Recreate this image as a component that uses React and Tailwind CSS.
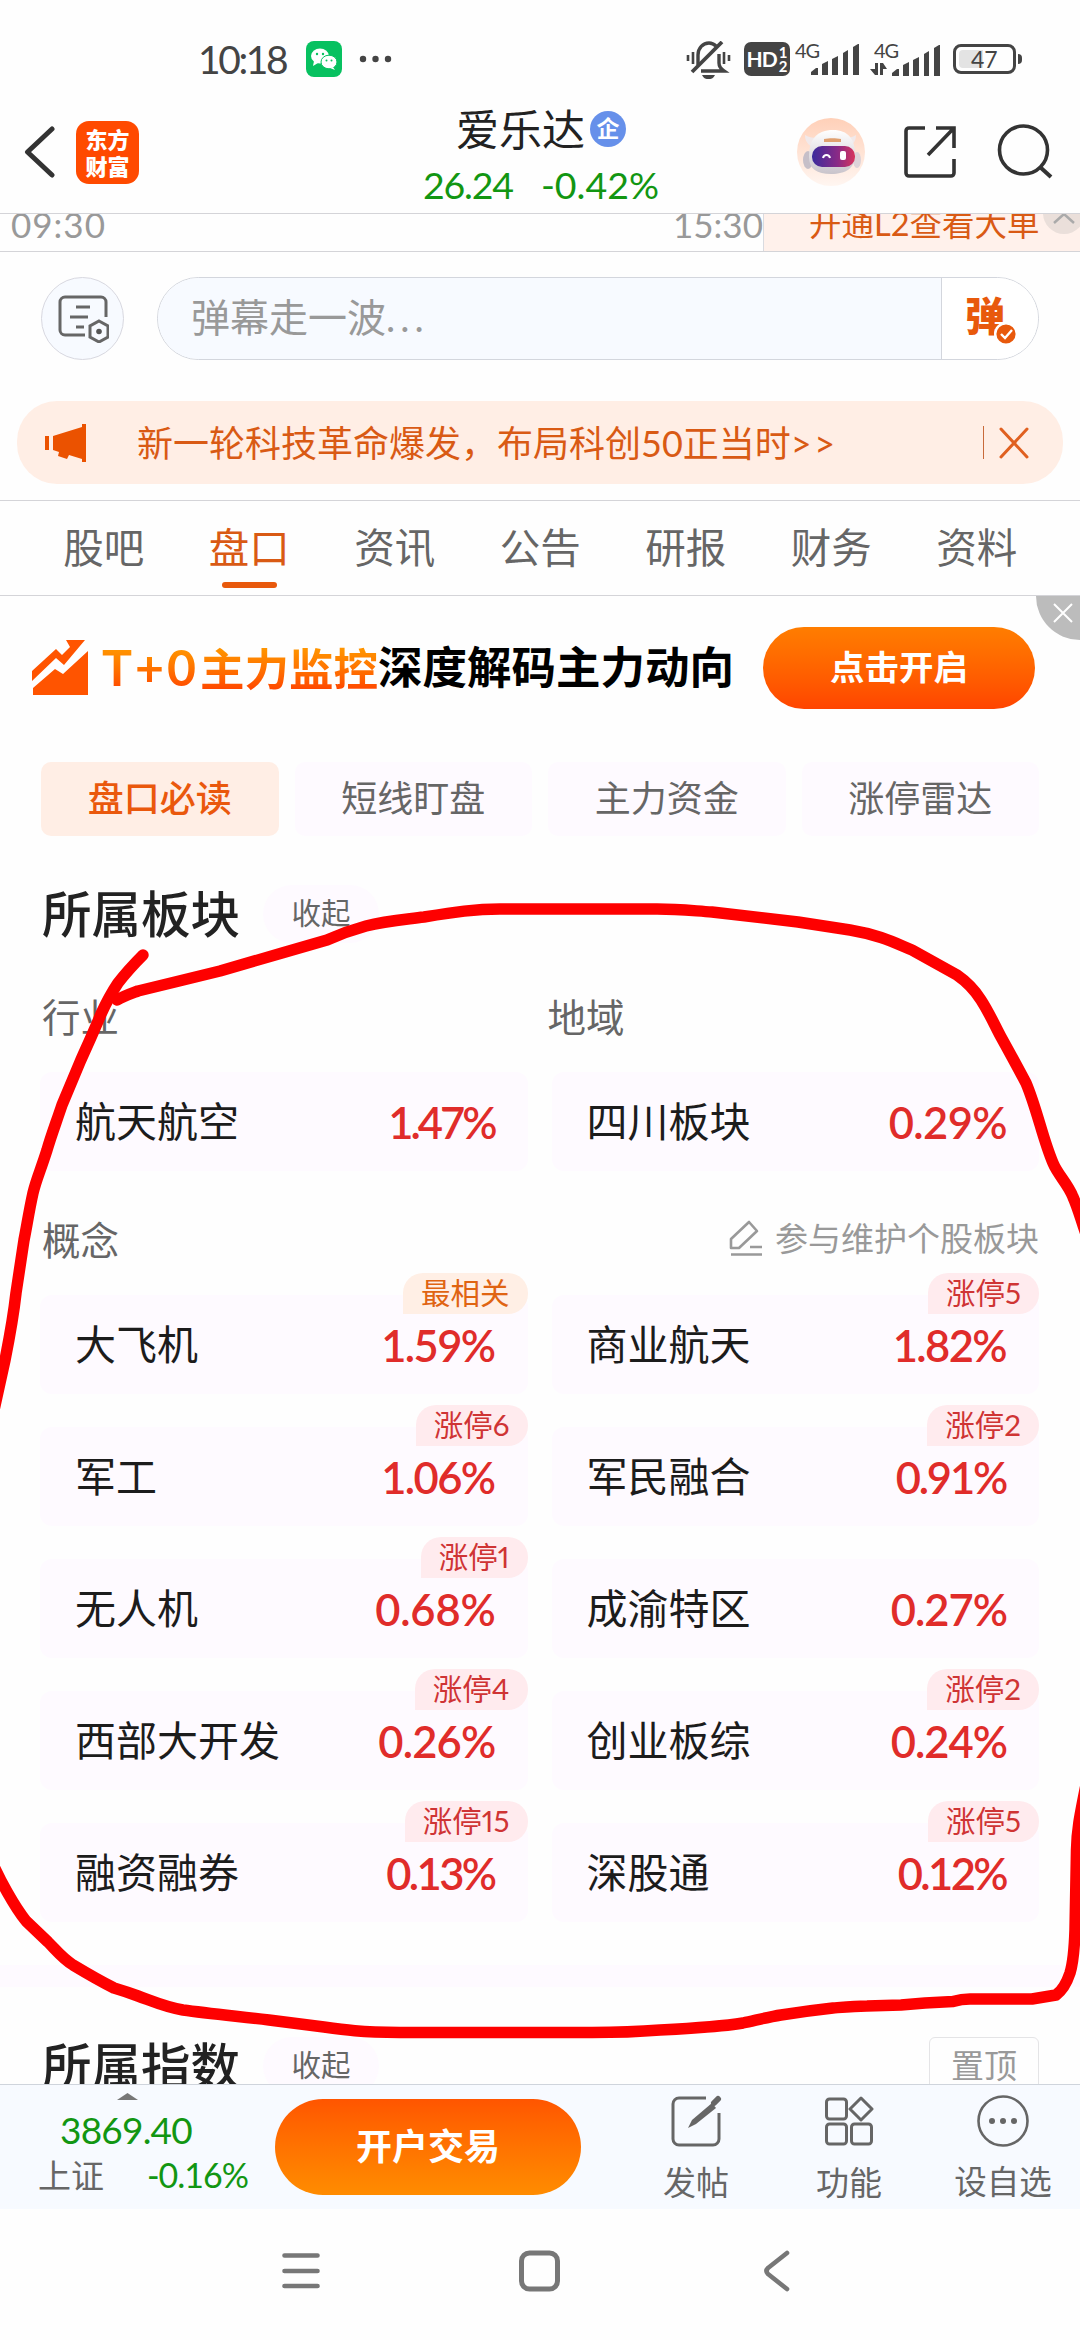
import clsx from "clsx";

const tabs = ["股吧", "盘口", "资讯", "公告", "研报", "财务", "资料"];
const chips = ["盘口必读", "短线盯盘", "主力资金", "涨停雷达"];

// fit: letter spacing of the percentage, narrow digits sit closer together
const tops = [
  { name: "航天航空", value: "1.47%", fit: "tracking-[-3px]" },
  { name: "四川板块", value: "0.29%", fit: "tracking-[-0.6px] -mr-px" },
];

const concepts = [
  { name: "大飞机", value: "1.59%", badge: "最相关", hot: true, fit: "tracking-[-1.6px]" },
  { name: "商业航天", value: "1.82%", badge: "涨停5", fit: "tracking-[-1.6px]" },
  { name: "军工", value: "1.06%", badge: "涨停6", fit: "tracking-[-1.6px]" },
  { name: "军民融合", value: "0.91%", badge: "涨停2", fit: "tracking-[-2.2px]" },
  { name: "无人机", value: "0.68%", badge: "涨停1", fit: "tracking-[-0.2px] -mr-px" },
  { name: "成渝特区", value: "0.27%", fit: "tracking-[-1px] -mr-px" },
  { name: "西部大开发", value: "0.26%", badge: "涨停4", fit: "tracking-[-0.8px] -mr-px" },
  { name: "创业板综", value: "0.24%", badge: "涨停2", fit: "tracking-[-1px] -mr-px" },
  { name: "融资融券", value: "0.13%", badge: "涨停15", fit: "tracking-[-2.6px]" },
  { name: "深股通", value: "0.12%", badge: "涨停5", fit: "tracking-[-2.6px]" },
];

function Signal() {
  return (
    <svg width="49" height="32" viewBox="0 0 49 32" fill="#444">
      <path d="M0 31v-3l5-4h2v7z" />
      <path d="M11 31V20l6-3v14z" />
      <path d="M21 31V15l6-3v19z" />
      <path d="M32 31V9l5-3v25z" />
      <path d="M42 31V3l5-3h1v31z" />
    </svg>
  );
}

function StatusBar() {
  return (
    <div className="flex h-[100px] items-start pl-[198px] pt-[41px] text-[#444]">
      <span className="w-[108px] text-[39px] leading-[36px] tracking-[-2.4px]">10:18</span>
      <svg width="36" height="36" viewBox="0 0 36 36">
        <rect width="36" height="36" rx="8" fill="#07c160" />
        <ellipse cx="14" cy="15" rx="9" ry="7.5" fill="#fff" />
        <path d="M8 20l-1 5 5-3z" fill="#fff" />
        <ellipse cx="23" cy="21" rx="8" ry="6.8" fill="#fff" stroke="#07c160" strokeWidth="1" />
        <path d="M27 26l2 3-5-2z" fill="#fff" />
        <circle cx="11" cy="13" r="1.2" fill="#07c160" />
        <circle cx="17" cy="13" r="1.2" fill="#07c160" />
        <circle cx="20.500" cy="19.500" r="1" fill="#07c160" />
        <circle cx="25.500" cy="19.500" r="1" fill="#07c160" />
      </svg>
      <svg className="ml-[17px] mt-[14px]" width="34" height="8" fill="#444">
        <circle cx="4" cy="4" r="3.200" />
        <circle cx="16.500" cy="4" r="3.200" />
        <circle cx="29" cy="4" r="3.200" />
      </svg>

      <svg className="ml-[293px]" width="46" height="38" viewBox="0 0 46 38" fill="none" stroke="#444" strokeWidth="3.400">
        <path d="M12 24V14c0-7 5-12 11-12 3 0 5 1 7 3" />
        <path d="M33 13v9c0 4 2 6 5 8H15" />
        <path d="M6 31L36 1" strokeWidth="3.800" />
        <path d="M2 14v6M7 11v12M38 11v12M43 14v6" strokeWidth="2.600" />
        <path d="M16 34h13c-2 4-4 4-6.500 4S18 38 16 34z" fill="#444" stroke="none" />
      </svg>
      <div className="ml-[12px] mt-px flex h-[34px] w-[46px] items-center justify-center rounded-[7px] bg-[#444] font-bold text-white">
        <span className="text-[21px] tracking-[-1px]">HD</span>
        <span className="ml-[2px] text-[15px] leading-[14px]">
          1<br />2
        </span>
      </div>
      <span className="ml-[5px] w-[16px] text-[20px] leading-[18px] tracking-[-1px]">4G</span>
      <div className="mt-[3px]"><Signal /></div>
      <div className="ml-[14px] w-[18px]">
        <div className="w-[30px] text-[20px] leading-[18px] tracking-[-1px]">4G</div>
        <svg className="-ml-[4px] mt-[4px]" width="17" height="12" viewBox="0 0 17 12" fill="#444">
          <path d="M5 0h3v12H5L0 6h5zM10 0h3l4 6h-4v6h-3z" />
        </svg>
      </div>
      <div className="mt-[4px]"><Signal /></div>
      <div className="ml-[12px] mt-[3px] flex h-[30px] w-[63px] rounded-[8px] border-[3px] border-[#444] p-[3px]">
        <div className="h-full w-[24px] rounded-l-[4px] bg-[#e3e3e3]" />
        <span className="-ml-[12px] text-[23px] leading-[18px]">47</span>
      </div>
      <div className="ml-[2px] mt-[13px] h-[10px] w-[4px] rounded-r bg-[#444]" />
    </div>
  );
}

function Robot() {
  return (
    <svg width="68" height="68" viewBox="0 0 68 68">
      <defs>
        <linearGradient id="halo" x1="0" y1="0" x2="0" y2="1">
          <stop offset="0" stopColor="#ffd0b8" />
          <stop offset="1" stopColor="#fff6f1" />
        </linearGradient>
        <linearGradient id="visor" x1="0" y1="0" x2="1" y2="0">
          <stop offset="0" stopColor="#3b2b9c" />
          <stop offset="0.600" stopColor="#8a2a86" />
          <stop offset="1" stopColor="#d8345c" />
        </linearGradient>
        <linearGradient id="shell" x1="0" y1="0" x2="0" y2="1">
          <stop offset="0" stopColor="#fff" />
          <stop offset="1" stopColor="#c9c4cb" />
        </linearGradient>
      </defs>
      <circle cx="34" cy="34" r="34" fill="url(#halo)" />
      <path d="M8 17c0 6 3 10 8 12l4-9c-5 0-9-1-12-3zM59 17c0 6-3 9-6 11l-5-9c5 1 8 0 11-2z" fill="#f1e9ea" />
      <ellipse cx="11" cy="42" rx="5" ry="9" fill="#c6bfc8" />
      <ellipse cx="60" cy="42" rx="4" ry="8" fill="#ddd3d8" />
      <path d="M12 39c0-18 8-27 24-27 15 0 22 9 22 25 0 13-9 19-24 19-14 0-22-5-22-17z" fill="url(#shell)" />
      <path d="M27 21c5-1 12-1 17 0v3H27z" fill="#e0a070" />
      <rect x="15" y="28" width="43" height="21" rx="10" fill="url(#visor)" />
      <path d="M26 40c1-4 6-4 7 0" fill="none" stroke="#fff" strokeWidth="2" />
      <rect x="43" y="33" width="6" height="9" rx="2" fill="#fff" />
    </svg>
  );
}

function Header() {
  return (
    <div className="flex h-[114px] items-start border-b border-[#d4d4d8] text-[#222]">
      <svg className="ml-[23px] mt-[26px]" width="34" height="52" viewBox="0 0 34 52" fill="none" stroke="#333" strokeWidth="5" strokeLinecap="round" strokeLinejoin="round">
        <path d="M29 3L4.500 26 29 49" />
      </svg>
      <div className="ml-[19px] mt-[21px] flex size-[63px] items-center justify-center rounded-[13px] bg-[#ff4a00] text-center text-[22px] font-black leading-[27px] text-white">
        东方
        <br />
        财富
      </div>
      <div className="ml-[284px] w-[236px]">
        <div className="ml-[33px] mt-[8px] flex items-center">
          <span className="text-[43px] leading-[44px]">爱乐达</span>
          <span className="ml-[5px] mt-[-3px] flex size-[36px] items-center justify-center rounded-full bg-[#6690ea] text-[23px] font-bold leading-none text-white">
            企
          </span>
        </div>
        <div className="mt-[12px] flex text-[37.500px] leading-[42px] text-[#129612]">
          <span className="w-[118px] tracking-[-1.2px]">26.24</span>
          <span>-0.42%</span>
        </div>
      </div>
      <div className="ml-[138px] mt-[18px]"><Robot /></div>
      <svg className="ml-[38px] mt-[25px]" width="54" height="54" viewBox="0 0 54 54" fill="none" stroke="#333" strokeWidth="3.600">
        <path d="M22 3H6a3 3 0 0 0-3 3v42a3 3 0 0 0 3 3h42a3 3 0 0 0 3-3V34M33 3h18v20M51 3L25 30" />
      </svg>
      <svg className="ml-[40px] mt-[24px]" width="56" height="56" viewBox="0 0 56 56" fill="none" stroke="#333" strokeWidth="3.600">
        <circle cx="26.500" cy="26" r="24" />
        <path d="M43 43l11 10" strokeWidth="4" />
      </svg>
    </div>
  );
}

function AxisRow() {
  return (
    <div className="flex h-[38px] overflow-hidden border-b border-[#d4d4d8] text-[35px] leading-[42px] text-[#999]">
      <span className="-mt-[11px] ml-[11px] w-[662px] tracking-[1px]">09:30</span>
      <span className="-mt-[11px] w-[90px] text-[#999]">15:30</span>
      <div className="relative h-[37px] flex-1 border-l border-[#d9dbe0] bg-[#fff1eb]">
        <span className="-mt-[11px] ml-[45px] block whitespace-nowrap text-[32.500px] text-[#d95a14]">开通L2查看大单</span>
        <div className="absolute -top-[22px] left-[279px] flex size-[42px] items-end justify-center rounded-full bg-[#eadfda] pb-[10px]">
          <svg width="22" height="12" viewBox="0 0 22 12" fill="none" stroke="#aaa" strokeWidth="2.500">
            <path d="M1 11L11 2l10 9" />
          </svg>
        </div>
      </div>
    </div>
  );
}

function BulletInput() {
  return (
    <div className="flex h-[149px] pl-[41px] pt-[25px]">
      <div className="flex size-[83px] items-center justify-center rounded-full border border-[#d8d8e0] bg-[#f7faff]">
        <svg width="52" height="48" viewBox="0 0 52 48" fill="none" stroke="#666" strokeWidth="3">
          <path d="M28 40H8a5 5 0 0 1-5-5V7a5 5 0 0 1 5-5h36a5 5 0 0 1 5 5v15" />
          <path d="M19 12h14M13 22h18M19 32h8" />
          <path d="M42 26l9 5v11l-9 5-9-5V31z" />
          <circle cx="42" cy="36.500" r="2.800" fill="#555" stroke="none" />
        </svg>
      </div>
      <div className="ml-[33px] flex h-[83px] w-[882px] overflow-hidden rounded-full border border-[#d3d6dd]">
        <div className="w-[784px] border-r border-[#d3d6dd] bg-[#f7faff] pl-[33px] text-[39px] leading-[79px] text-[#999]">
          弹幕走一波<span className="tracking-[5px]">...</span>
        </div>
        <div className="relative flex-1 bg-white">
          <span className="absolute left-[23px] top-[13px] text-[40px] font-black leading-[50px] text-[#e8590c]">弹</span>
          <svg className="absolute left-[52px] top-[44px]" width="24" height="24" viewBox="0 0 24 24">
            <circle cx="12" cy="12" r="10.800" fill="#e8590c" stroke="#fff" strokeWidth="2.400" />
            <path d="M7 12l4 4 7-8" fill="none" stroke="#fff" strokeWidth="2.400" />
          </svg>
        </div>
      </div>
    </div>
  );
}

function Notice() {
  return (
    <div className="mx-[17px] flex h-[83px] items-center rounded-[40px] bg-[#ffeee5] text-[#d95a14]">
      <svg className="ml-[28px]" width="42" height="38" viewBox="0 0 42 38" fill="#eb5200">
        <path d="M0 12h4v14H0zM8 12l29-9V0h4v38h-4v-3l-13-4-2 4-9-3 1-4-6-2z" />
      </svg>
      <span className="ml-[50px] flex-1 text-[36px] leading-[50px]">
        新一轮科技革命爆发，布局科创50正当时<span className="tracking-[2.5px]">&gt;&gt;</span>
      </span>
      <div className="h-[33px] w-px bg-[#c86a3a]" />
      <svg className="ml-[14px] mr-[33px]" width="32" height="32" viewBox="0 0 32 32" stroke="#e06020" strokeWidth="3" strokeLinecap="round">
        <path d="M3 2l26 28M29 2L3 30" />
      </svg>
    </div>
  );
}

function Tabs() {
  return (
    <div className="mt-[16px] flex h-[96px] border-y border-[#d4d4d8] pl-[31px] text-[40.500px] leading-[94px] text-[#666]">
      {tabs.map((tab, i) => (
        <div key={tab} className={clsx("flex h-[94px] w-[145.500px] flex-col items-center", i === 1 && "text-[#d95a14]")}>
          <span className="h-[81px]">{tab}</span>
          {i === 1 && <div className="h-[6px] w-[55px] rounded-full bg-[#e8590c]" />}
        </div>
      ))}
    </div>
  );
}

function Promo() {
  return (
    <div className="relative flex h-[166px] pl-[32px]">
      <svg className="mt-[44px]" width="57" height="56" viewBox="0 0 57 56" fill="#ff5400">
        <path d="M0 31L24 9l6 6 8-8-4-7h19L32 25l-8-7L0 41z" />
        <path d="M1 48l22-19 8 5L56 11v44H1z" />
      </svg>
      <div className="mt-[44px] flex h-[56px] w-[674px] whitespace-nowrap pl-[13px] text-[44.500px] font-bold leading-[54px] text-black">
        <span className="bg-linear-to-b from-[#ff9500] from-15% to-[#ff4400] to-90% bg-clip-text text-transparent">
          <span className="inline-block w-[98px] text-[50px] tracking-[3px]">T+0</span>主力监控
        </span>
        <span>深度解码主力动向</span>
      </div>
      <div className="mt-[31px] h-[82px] w-[272px] rounded-full bg-linear-to-b from-[#ff7d00] to-[#ff4400] text-center text-[34.500px] font-bold leading-[80px] text-white">
        点击开启
      </div>
      <div className="absolute right-0 top-0 flex h-[44px] w-[44px] rounded-bl-[44px] bg-[#bcbcbc] pl-[17px] pt-[7px]">
        <svg width="20" height="20" viewBox="0 0 20 20" stroke="#fff" strokeWidth="2">
          <path d="M1 1l18 18M19 1L1 19" />
        </svg>
      </div>
    </div>
  );
}

function SectionTitle({ title, children }) {
  return (
    <div className="flex h-[58px] items-center pl-[42px] pr-[41px]">
      <h2 className="w-[221px] text-[49.500px] font-medium leading-[58px] text-[#222]">{title}</h2>
      <div className="h-[58px] w-[116px] rounded-full bg-[#fefaff] text-center text-[29.500px] leading-[56px] text-[#666]">收起</div>
      {children}
    </div>
  );
}

function Card({ item }) {
  return (
    <div className="relative flex h-[99px] items-center justify-between rounded-[12px] bg-[#fefaff] pl-[35px] pr-[33px]">
      <span className="text-[41px] leading-[50px] text-[#1c1c1c]">{item.name}</span>
      <span className={clsx("text-[43.500px] font-semibold leading-[50px] text-[#e02c2a]", item.fit)}>{item.value}</span>
      {item.badge && (
        <span
          className={clsx(
            "absolute -top-[22px] right-0 h-[41px] rounded-[20px] rounded-bl-none px-[18px] text-[29.500px] leading-[40px] proportional-nums",
            item.hot ? "bg-[#ffefe5] text-[#e06412]" : "bg-[#ffebee] text-[#cf3434]"
          )}
        >
          {item.badge}
        </span>
      )}
    </div>
  );
}

function Sectors() {
  return (
    <div className="h-[972px] pl-[40px] pr-[41px]">
      <div className="mt-[50px] grid h-[50px] grid-cols-2 gap-x-[24px] text-[38.500px] leading-[48px] text-[#666]">
        <span className="pl-[2px]">行业</span>
        <span className="-ml-[4px]">地域</span>
      </div>
      <div className="mt-[29px] grid grid-cols-2 gap-x-[24px]">
        {tops.map((item) => <Card key={item.name} item={item} />)}
      </div>
      <div className="mt-[42px] flex h-[50px] items-center justify-between text-[#666]">
        <span className="pl-[2px] pt-[3px] text-[38.500px] leading-[50px]">概念</span>
        <span className="flex items-center text-[33px] leading-[48px] text-[#999]">
          <svg className="mr-[12px]" width="34" height="36" viewBox="0 0 34 36" fill="none" stroke="#999" strokeWidth="2.600" strokeLinejoin="round">
            <path d="M2 19L20 2l8 9-18 17H2zM2 34.500h31M21 27h12" />
          </svg>
          参与维护个股板块
        </span>
      </div>
      <div className="mt-[32px] grid grid-cols-2 gap-x-[24px] gap-y-[33px]">
        {concepts.map((item) => <Card key={item.name} item={item} />)}
      </div>
    </div>
  );
}

function BottomBar() {
  return (
    <div className="flex h-[125px] border-t border-[#cfd4dc] bg-[#f7faff] text-[33px] leading-[44px] text-[#666]">
      <div className="w-[275px]">
        <svg className="ml-[117px] mt-[8px]" width="21" height="7" fill="#777">
          <path d="M0 7L10.500 0 21 7z" />
        </svg>
        <div className="ml-[60px] mt-[8px] text-[37px] tracking-[-0.8px] text-[#129612]">3869.40</div>
        <div className="ml-[38px] mt-px flex w-[210px] justify-between">
          <span>上证</span>
          <span className="text-[34px] tracking-[-1px] text-[#129612]">-0.16%</span>
        </div>
      </div>
      <div className="mt-[14px] h-[96px] w-[306px] rounded-full bg-linear-to-b from-[#ff5500] to-[#ff8c00] text-center text-[36px] font-bold leading-[94px] text-white">
        开户交易
      </div>
      <div className="ml-[50px] flex w-[130px] flex-col items-center">
        <svg className="mt-[9px]" width="52" height="54" viewBox="0 0 52 54" fill="none" stroke="#666" strokeWidth="3">
          <path d="M36 4H9a6 6 0 0 0-6 6v35a6 6 0 0 0 6 6h34a6 6 0 0 0 6-6V19" />
          <path d="M18 34l4-8 20-17 4 5-20 16z" fill="#666" stroke="none" />
          <path d="M44 9l4-4" strokeWidth="6" strokeLinecap="round" />
        </svg>
        <span className="mt-[12px]">发帖</span>
      </div>
      <div className="ml-[23px] flex w-[130px] flex-col items-center">
        <svg className="mt-[9px]" width="50" height="54" viewBox="0 0 50 54" fill="none" stroke="#666" strokeWidth="3">
          <rect x="2.500" y="5" width="20" height="20" rx="3" />
          <rect x="2.500" y="30" width="20" height="20" rx="3" />
          <rect x="27.500" y="30" width="20" height="20" rx="3" />
          <path d="M37 4l11 11-11 11-11-11z" strokeLinejoin="round" />
        </svg>
        <span className="mt-[12px]">功能</span>
      </div>
      <div className="ml-[24px] flex w-[130px] flex-col items-center">
        <svg className="mt-[9px]" width="54" height="54" viewBox="0 0 54 54" fill="none" stroke="#666" strokeWidth="2.600">
          <circle cx="27" cy="27" r="24.500" />
          <path d="M16 27h.01M27 27h.01M38 27h.01" strokeWidth="6" strokeLinecap="round" />
        </svg>
        <span className="mt-[12px] text-[32.500px]">设自选</span>
      </div>
    </div>
  );
}

function NavBar() {
  return (
    <div className="flex h-[130px] items-start pl-[281px] pt-[40px]">
      <svg width="40" height="44" viewBox="0 0 40 44" stroke="#777" strokeWidth="4.600" strokeLinecap="round">
        <path d="M3.500 6.500h33M3.500 22h33M3.500 37h33" />
      </svg>
      <svg className="ml-[197px]" width="43" height="44" viewBox="0 0 43 44" fill="none" stroke="#777" strokeWidth="5">
        <rect x="3.500" y="4" width="36" height="36" rx="8" />
      </svg>
      <svg className="ml-[202px]" width="28" height="44" viewBox="0 0 28 44" fill="none" stroke="#777" strokeWidth="4.600" strokeLinecap="round" strokeLinejoin="round">
        <path d="M24 4L5 19q-3 3 0 6l19 15" />
      </svg>
    </div>
  );
}

// freehand circle drawn over the sector list
function Marker() {
  return (
    <svg className="absolute left-0 top-0" width="1080" height="2340" fill="none" stroke="#fe0000" strokeWidth="11.500" strokeLinecap="round" strokeLinejoin="round">
      <path d="M117 1000C124 996 130 994 138 991L175 982 220 971 282 953 327 940C345 932 355 929 366 926C385 921 400 920 424 917C455 912 475 909 500 909L657 909C680 909 695 911 712 912L798 922 850 930C880 935 895 943 912 950L957 975C970 984 976 992 981 1000C990 1014 995 1026 1001 1037C1011 1055 1018 1068 1026 1083C1037 1109 1043 1140 1053 1163C1058 1175 1068 1184 1073 1197C1078 1208 1080 1217 1088 1240" />
      <path d="M143 955C134 964 125 974 118 983C112 992 106 1003 101 1014C94 1031 88 1044 80 1062L62 1105C56 1123 51 1136 47 1150C40 1172 36 1180 33 1193C29 1211 27 1225 24 1240L16 1293C13 1320 10 1335 5 1360L-6 1410" />
      <path d="M-8 1862C0 1880 14 1906 26 1921L48 1942C56 1950 62 1958 73 1965C88 1974 100 1981 114 1988C124 1991 130 1993 138 1996C152 2001 165 2007 183 2010C205 2013 225 2015 269 2020L324 2027C345 2030 360 2032 400 2032.500L592 2032.500C620 2032.500 635 2032 660 2030C700 2028 725 2026 743 2023C757 2020 768 2017 781 2015C800 2012 815 2010 833 2008C845 2007 855 2006 867 2006L901 2005 925 2003 953 2001.500C958 2000 962 1999 970 1999L1032 1999 1056 1995C1063 1990 1067 1982 1070 1973C1074 1960 1074.500 1945 1075 1930L1076.500 1850C1077 1828 1080 1815 1087 1780" />
    </svg>
  );
}

export default function App() {
  return (
    <div className="relative h-[2340px] w-[1080px] overflow-hidden bg-[#fefefe] font-['Lato','Noto_Sans_CJK_SC',sans-serif]">
      <StatusBar />
      <Header />
      <AxisRow />
      <BulletInput />
      <Notice />
      <Tabs />
      <Promo />
      <div className="mb-[49px] grid h-[74px] grid-cols-4 gap-[16px] px-[41px] text-center text-[36px] leading-[73px]">
        {chips.map((chip, i) => (
          <div key={chip} className={clsx("rounded-[10px]", i === 0 ? "bg-[#ffeee5] font-medium text-[#ea580c]" : "bg-[#fefaff] text-[#666]")}>
            {chip}
          </div>
        ))}
      </div>
      <SectionTitle title="所属板块" />
      <Sectors />
      <div className="h-[22px] bg-[#fefaff]" />
      <div className="h-[97px] overflow-hidden pt-[50px]">
        <SectionTitle title="所属指数">
          <div className="ml-auto h-[58px] w-[110px] rounded-[6px] border border-[#e4e4e6] text-center text-[33px] leading-[54px] text-[#999]">置顶</div>
        </SectionTitle>
      </div>
      <BottomBar />
      <NavBar />
      <Marker />
    </div>
  );
}
